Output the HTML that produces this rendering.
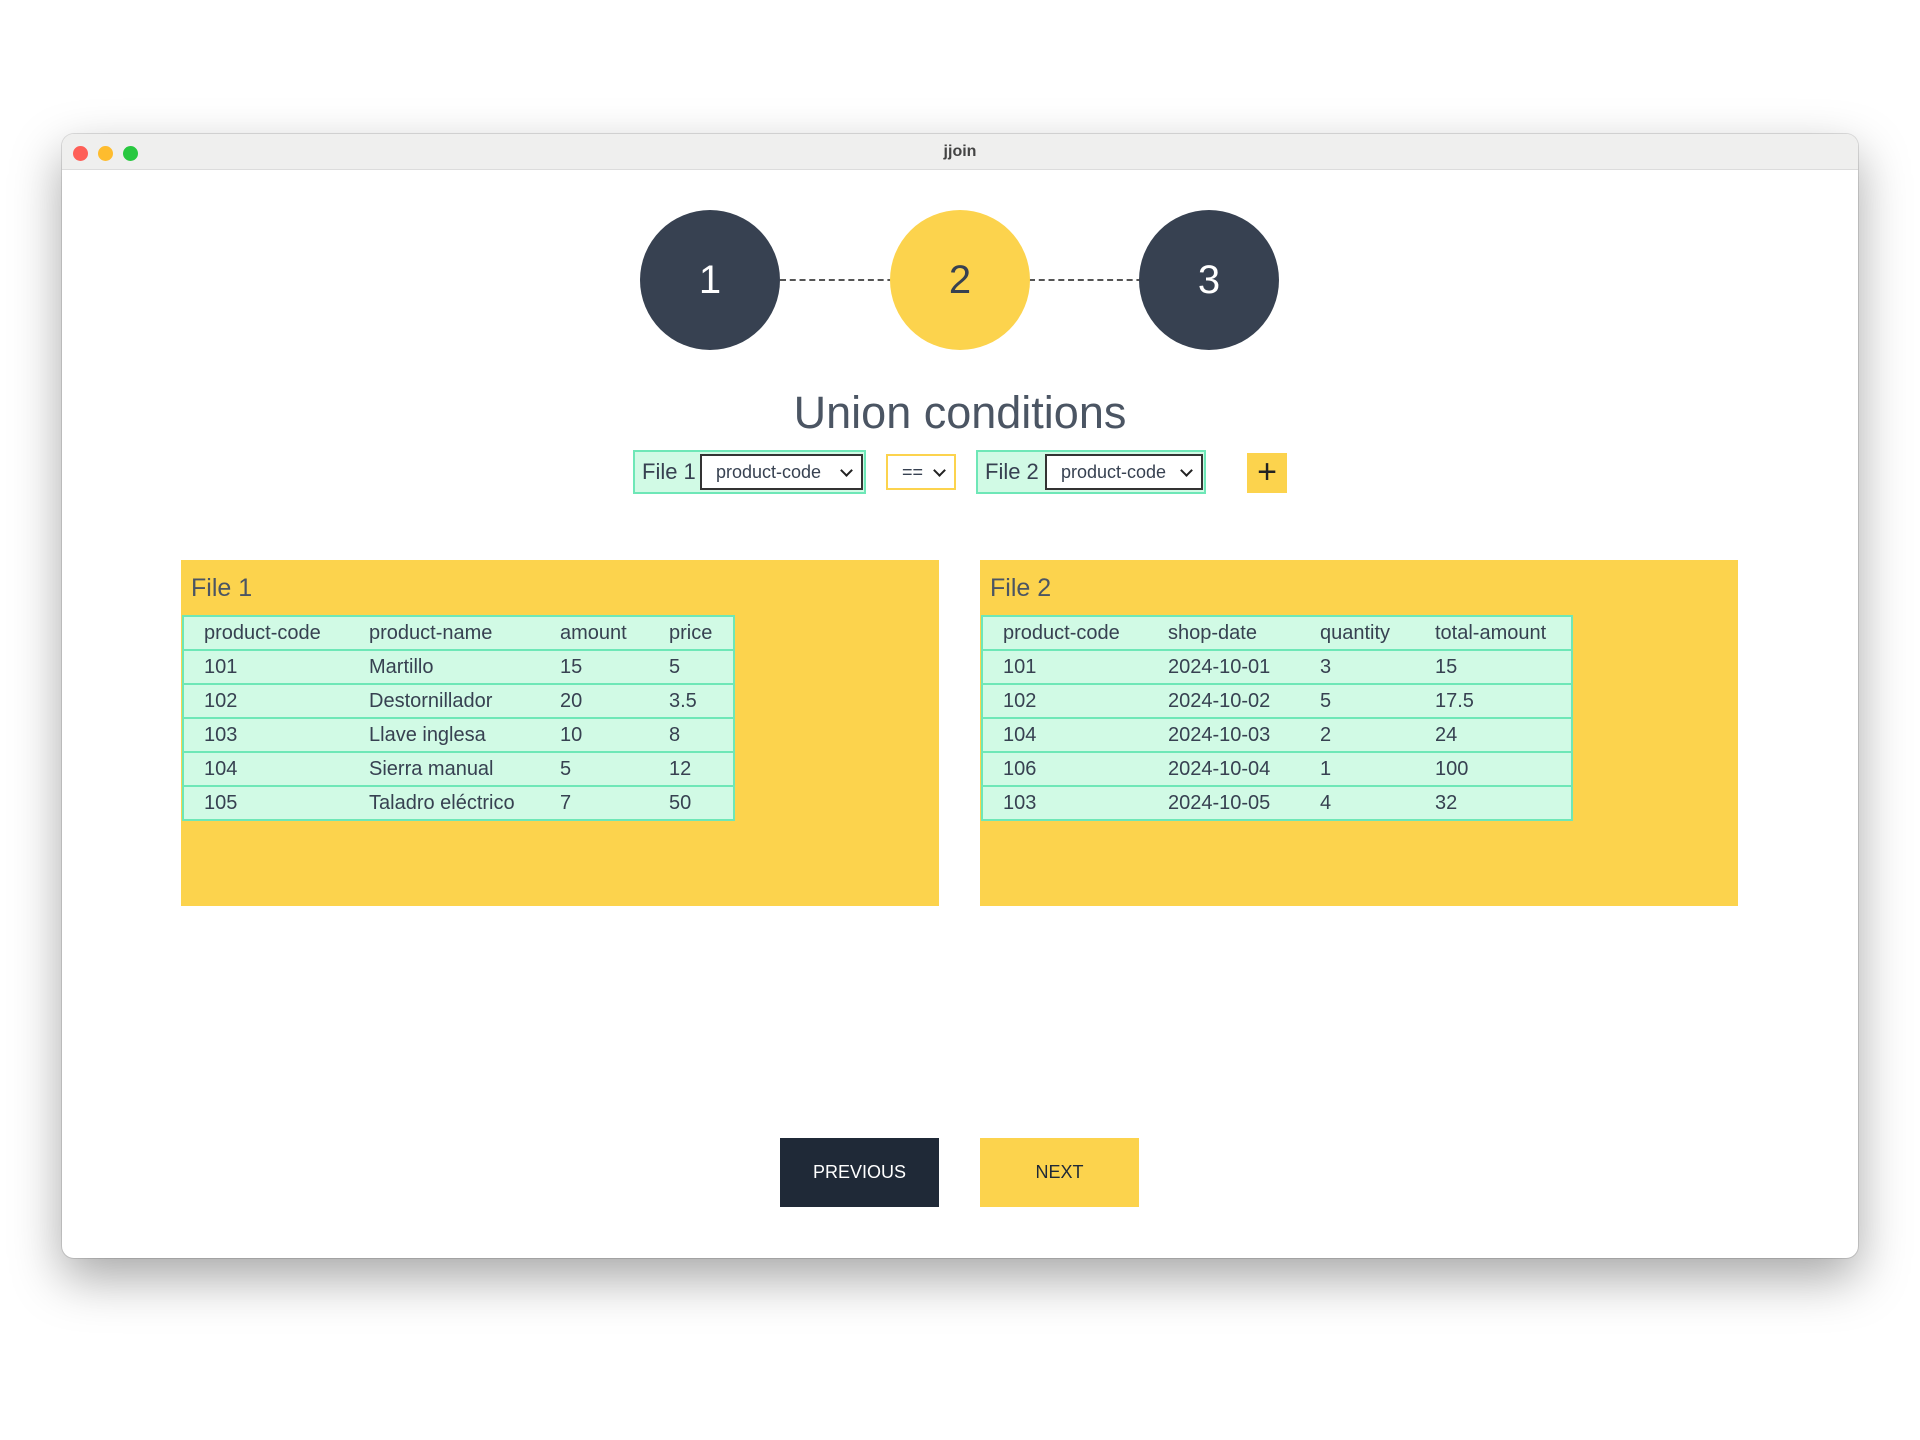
<!DOCTYPE html>
<html><head><meta charset="utf-8"><style>
*{box-sizing:border-box;margin:0;padding:0}
body{width:1920px;height:1440px;background:#fff;position:relative;font-family:"Liberation Sans",sans-serif;color:#374151;overflow:hidden}
.win{position:absolute;left:62px;top:134px;width:1796px;height:1124px;background:#fff;border-radius:12px;box-shadow:0 20px 50px rgba(0,0,0,.35),0 0 0 1px rgba(0,0,0,.12);overflow:hidden}
.tb{position:absolute;left:0;top:0;width:100%;height:36px;background:#efefee;border-bottom:1px solid #dcdcdc;text-align:center;font-weight:bold;font-size:16px;line-height:36px;color:#444}
.dot{position:absolute;top:12px;width:15px;height:15px;border-radius:50%}
.a{position:absolute}
.c{position:absolute;width:140px;height:140px;border-radius:50%;top:76px;text-align:center;line-height:140px;font-size:40px;font-weight:300}
.line{position:absolute;top:145px;height:0;border-top:2px dashed #555}
.box{position:absolute;background:#d1fae5;border:2px solid #6ee7b7;font-size:22px;color:#374151}
.sel{position:absolute;background:#fff;border:2px solid #333;font-size:18px;line-height:32px;padding-left:14px}
.sel:after{content:"";position:absolute;right:10px;top:10px;width:7px;height:7px;border-right:2px solid #222;border-bottom:2px solid #222;transform:rotate(45deg)}
.panel{position:absolute;background:#fcd34d;top:426px;width:758px;height:346px}
.panel h3{position:absolute;left:10px;top:14px;font-weight:normal;font-size:25px;color:#4b5563}
table{position:absolute;left:1px;top:55px;border-collapse:collapse;background:#d1fae5;font-size:20px;color:#374151}
td{border:2px solid #6ee7b7;border-left:none;border-right:none;height:34px;padding:0}
table{border:2px solid #6ee7b7}
.btn{position:absolute;top:1004px;width:159px;height:69px;text-align:center;line-height:69px;font-size:18px}
</style></head><body>
<div class="win">
<div class="tb">jjoin</div>
<div class="dot" style="left:11px;background:#fe5f57"></div>
<div class="dot" style="left:36px;background:#febc2e"></div>
<div class="dot" style="left:61px;background:#28c840"></div>
<div class="line" style="left:718px;width:172px"></div>
<div class="line" style="left:967px;width:172px"></div>
<div class="c" style="left:578px;background:#374151;color:#fff">1</div>
<div class="c" style="left:828px;background:#fcd34d;color:#374151">2</div>
<div class="c" style="left:1077px;background:#374151;color:#fff">3</div>
<div class="a" style="left:0;width:100%;top:253px;text-align:center;font-size:45px;font-weight:300;color:#4b5563">Union conditions</div>
<div class="box" style="left:571px;top:316px;width:233px;height:44px"><span style="position:absolute;left:7px;top:7px">File 1</span></div>
<div class="sel" style="left:638px;top:320px;width:163px;height:36px">product-code</div>
<div class="sel" style="left:824px;top:320px;width:70px;height:36px;border-color:#fcd34d">==</div>
<div class="box" style="left:914px;top:316px;width:230px;height:44px"><span style="position:absolute;left:7px;top:7px">File 2</span></div>
<div class="sel" style="left:983px;top:320px;width:158px;height:36px">product-code</div>
<div class="a" style="left:1185px;top:319px;width:40px;height:40px;background:#fcd34d;text-align:center;line-height:38px;font-size:34px;font-weight:300;color:#222">+</div>
<div class="panel" style="left:119px"><h3>File 1</h3>
<table style="width:553px"><colgroup><col style="width:186px"><col style="width:191px"><col style="width:109px"><col></colgroup>
<tr><td style="padding-left:20px">product-code</td><td>product-name</td><td>amount</td><td>price</td></tr>
<tr><td style="padding-left:20px">101</td><td>Martillo</td><td>15</td><td>5</td></tr>
<tr><td style="padding-left:20px">102</td><td>Destornillador</td><td>20</td><td>3.5</td></tr>
<tr><td style="padding-left:20px">103</td><td>Llave inglesa</td><td>10</td><td>8</td></tr>
<tr><td style="padding-left:20px">104</td><td>Sierra manual</td><td>5</td><td>12</td></tr>
<tr><td style="padding-left:20px">105</td><td>Taladro eléctrico</td><td>7</td><td>50</td></tr>
</table></div>
<div class="panel" style="left:918px"><h3>File 2</h3>
<table style="width:592px"><colgroup><col style="width:186px"><col style="width:152px"><col style="width:115px"><col></colgroup>
<tr><td style="padding-left:20px">product-code</td><td>shop-date</td><td>quantity</td><td>total-amount</td></tr>
<tr><td style="padding-left:20px">101</td><td>2024-10-01</td><td>3</td><td>15</td></tr>
<tr><td style="padding-left:20px">102</td><td>2024-10-02</td><td>5</td><td>17.5</td></tr>
<tr><td style="padding-left:20px">104</td><td>2024-10-03</td><td>2</td><td>24</td></tr>
<tr><td style="padding-left:20px">106</td><td>2024-10-04</td><td>1</td><td>100</td></tr>
<tr><td style="padding-left:20px">103</td><td>2024-10-05</td><td>4</td><td>32</td></tr>
</table></div>
<div class="btn" style="left:718px;background:#1f2937;color:#fff">PREVIOUS</div>
<div class="btn" style="left:918px;background:#fcd34d;color:#1f2937">NEXT</div>
</div>
</body></html>
